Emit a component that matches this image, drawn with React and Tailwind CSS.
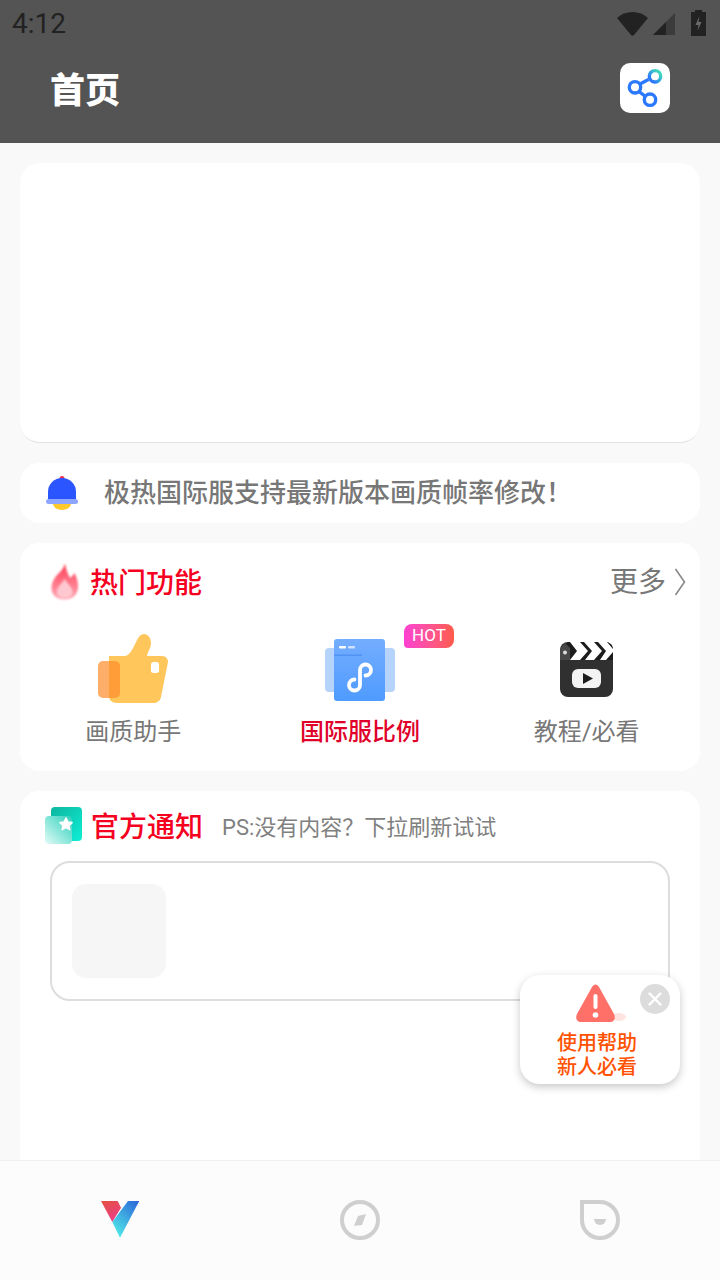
import React from "react";

const cjk = "font-['Roboto','Noto_Sans_CJK_SC',sans-serif]";

const Bell = () => (
  <svg viewBox="0 0 32 34" className="w-8 h-[34px] shrink-0">
    <path d="M13.5 3a2.5 3 0 0 1 5 0z" fill="#f0304a" />
    <path d="M2 23v-7a14 14 0 0 1 28 0v7z" fill="#2a55ff" />
    <path d="M7 28h18a9 6 0 0 1-18 0z" fill="#ffc92c" />
    <rect x="0" y="23" width="32" height="5" rx="2.5" fill="#8ea6ff" />
  </svg>
);

const Flame = () => (
  <svg viewBox="0 0 32 40" className="w-8 h-10 shrink-0">
    <defs>
      <linearGradient id="fl" x1="0" y1="0" x2="0" y2="1">
        <stop offset="0" stopColor="#ff3d55" />
        <stop offset="1" stopColor="#ffa9b6" />
      </linearGradient>
      <filter id="flb" x="-20%" y="-20%" width="140%" height="140%">
        <feGaussianBlur stdDeviation="0.9" />
      </filter>
    </defs>
    <g filter="url(#flb)">
      <path
        d="M17 1.5C18 8 20 12 22 16 24 14 25.5 13 26.5 11 29 16 30.5 21 30 26 29.5 33 24 37.5 16.5 37.5 9 37.5 3.5 33 3.5 26 3.5 20 7 15 10 12 13 9 16 6 17 1.5Z"
        fill="url(#fl)"
      />
      <path d="M16.7 16.5C18 21 24.5 25 24.5 30 24.5 33.5 21 36 16.7 36 12.5 36 9 33.5 9 30 9 24 15 22 16.7 16.5Z" fill="#ffc8d0" />
    </g>
  </svg>
);

const Thumb = () => (
  <svg viewBox="0 0 70 70" className="w-[70px] h-[70px]">
    <path
      d="M11 22H27C32 22 36 12 39 6 41 2 43 0 46 0 50 0 53 4 53 9 53 14 50 17 49 22H64C68 22 70 25 70 28L63 63C62 67 59 69 55 69H19C14 69 11 66 11 62Z"
      fill="#ffc65c"
    />
    <rect x="53" y="28" width="8" height="11" rx="2.5" fill="#fff" />
    <rect x="0" y="27" width="22" height="37" rx="5" fill="#ff8c2a" fillOpacity="0.7" />
  </svg>
);

const MiniApp = () => (
  <svg viewBox="0 0 70 62" className="w-[70px] h-[62px]">
    <defs>
      <linearGradient id="ma" x1="0" y1="0" x2="0" y2="1">
        <stop offset="0" stopColor="#74adff" />
        <stop offset="1" stopColor="#4f9bff" />
      </linearGradient>
    </defs>
    <rect x="0" y="9" width="70" height="44" rx="4" fill="#b6d3fb" />
    <rect x="9" y="0" width="51" height="62" rx="3" fill="url(#ma)" />
    <rect x="14" y="7" width="7" height="2.5" rx="1" fill="#fff" />
    <rect x="23" y="7" width="7" height="2.5" rx="1" fill="#cfe2ff" />
    <rect x="9" y="15.5" width="28" height="1.5" fill="#3f86f0" fillOpacity="0.6" />
    <path
      d="M29.5 40.5a5.5 5.5 0 1 0 5.5 5.5V31a5.5 5.5 0 1 1 5.5 5.5"
      fill="none"
      stroke="#fff"
      strokeWidth="3.8"
      strokeLinecap="round"
    />
  </svg>
);

const Clapper = () => (
  <svg viewBox="0 0 53 55" className="w-[53px] h-[55px]">
    <rect x="0" y="0" width="53" height="55" rx="8" fill="#303030" />
    <path d="M0 18V8L8 0h37c5 0 8 3 8 8v10z" fill="#1c1c1c" />
    <polygon points="10,0 20,0 28,9 20,18 10,18 17,9" fill="#fff" />
    <polygon points="24,0 34,0 42,9 34,18 25,18 32,9" fill="#fff" />
    <polygon points="38,0 47,0 53,7 53,10 46,18 40,18 46,9" fill="#fff" />
    <path d="M0 18V7L5 1l5 5 0 12z" fill="#484848" />
    <circle cx="5" cy="10.5" r="2" fill="#ddd" />
    <rect x="12" y="27" width="29" height="19" rx="6" fill="#f3f3f3" />
    <polygon points="23,31 33,36.5 23,42" fill="#1c1c1c" />
  </svg>
);

const Notice = () => (
  <svg viewBox="0 0 38 38" className="w-[38px] h-[38px] shrink-0">
    <defs>
      <linearGradient id="tb" x1="0" y1="0" x2="1" y2="1">
        <stop offset="0" stopColor="#0db5a0" />
        <stop offset="1" stopColor="#0fefd5" />
      </linearGradient>
      <linearGradient id="tf" x1="1" y1="0" x2="0" y2="1">
        <stop offset="0" stopColor="#2bd0bc" />
        <stop offset="1" stopColor="#e2fbf6" />
      </linearGradient>
    </defs>
    <rect x="6" y="0" width="31" height="34" rx="4" fill="url(#tb)" />
    <rect x="0" y="9" width="27" height="28" rx="4" fill="url(#tf)" />
    <polygon
      points="21,11 23,15 27,15.6 24,18.6 24.8,22.6 21,20.6 17.2,22.6 18,18.6 15,15.6 19,15"
      fill="#fff"
      stroke="#fff"
      strokeWidth="1.6"
      strokeLinejoin="round"
    />
  </svg>
);

const Share = () => (
  <svg viewBox="0 0 50 50" className="w-[50px] h-[50px]">
    <defs>
      <linearGradient id="sh" x1="0" y1="1" x2="1" y2="0">
        <stop offset="0.2" stopColor="#2a78fb" />
        <stop offset="0.8" stopColor="#3fd4bd" />
      </linearGradient>
    </defs>
    <path d="M20 21L28.5 16.5M19 28.5L25.5 33.5" stroke="#2a78fb" strokeWidth="3.4" />
    <circle cx="15" cy="24.3" r="5.7" fill="none" stroke="#2a78fb" strokeWidth="3.4" />
    <circle cx="30" cy="36.7" r="5.7" fill="none" stroke="#2a78fb" strokeWidth="3.4" />
    <circle cx="35" cy="13.3" r="5.7" fill="none" stroke="url(#sh)" strokeWidth="3.4" />
  </svg>
);

const Feature = ({ label, active, hot, pad, children }) => (
  <div className="flex flex-col items-center">
    <div className={`relative h-[74px] flex items-end justify-center ${pad}`}>
      {children}
      {hot && (
        <span className="absolute left-[79px] top-[-6px] w-[50px] h-6 flex items-center justify-center rounded-t-lg rounded-br-lg rounded-bl-sm bg-gradient-to-r from-[#ff3fd2] to-[#ff5a48] text-white text-[17px] font-['Roboto',sans-serif]">
          HOT
        </span>
      )}
    </div>
    <span className={`mt-[10px] text-2xl leading-9 ${active ? "font-medium text-[#e0002a]" : "text-[#777777]"}`}>
      {label}
    </span>
  </div>
);

const HelpPopup = () => (
  <div className="absolute left-[520px] top-[975px] w-40 h-[109px] rounded-[20px] bg-white shadow-[0_3px_8px_rgba(0,0,0,0.22)] flex flex-col items-center pr-[6px] pt-[9px]">
    <svg viewBox="0 0 52 40" className="w-[52px] h-10 shrink-0 ml-2">
      <ellipse cx="44" cy="33" rx="7" ry="4" fill="#ffe3e0" />
      <path
        d="M17 3c2-3.5 5-3.5 7 0l15 27c2 4 0 8-4 8H6c-4 0-6-4-4-8z"
        fill="#ff7068"
      />
      <rect x="18.5" y="10" width="4" height="15" rx="2" fill="#fff" />
      <circle cx="20.5" cy="31" r="2.8" fill="#fff" />
    </svg>
    <p className="text-xl leading-6 text-[#ff5200] text-center font-medium mt-[7px]">
      使用帮助
      <br />
      新人必看
    </p>
    <span className="absolute right-[10px] top-[9px] w-[30px] h-[30px] rounded-full bg-[#dcdcdc] flex items-center justify-center">
      <svg viewBox="0 0 14 14" className="w-[14px] h-[14px]">
        <path d="M1.5 1.5l11 11M12.5 1.5l-11 11" stroke="#fff" strokeWidth="2.4" strokeLinecap="round" />
      </svg>
    </span>
  </div>
);

const TabBar = () => (
  <div className="h-[120px] shrink-0 grid grid-cols-3 items-center justify-items-center bg-[#fcfcfc] border-t border-[#f0f0f0] pb-[1px]">
    <svg viewBox="0 0 38.5 37" className="w-[38.5px] h-[37px] mt-[-1px]">
      <defs>
        <linearGradient id="vr" x1="0" y1="0" x2="0.5" y2="1">
          <stop offset="0" stopColor="#e5503f" />
          <stop offset="1" stopColor="#ea3f85" />
        </linearGradient>
        <linearGradient id="vb" x1="1" y1="0" x2="0.3" y2="1">
          <stop offset="0" stopColor="#2b62d8" />
          <stop offset="1" stopColor="#4ee6e8" />
        </linearGradient>
      </defs>
      <polygon points="0,0 16.7,0 20,6.7 11.3,21" fill="url(#vr)" />
      <polygon points="38.3,0 27,0 11.3,21 19,36.7" fill="url(#vb)" />
    </svg>
    <svg viewBox="0 0 40 40" className="w-10 h-10">
      <circle cx="20" cy="20" r="18" fill="none" stroke="#cfcfcf" strokeWidth="4" />
      <polygon points="26,14 22,25 14,26 18,16" fill="#cfcfcf" />
    </svg>
    <svg viewBox="0 0 40 40" className="w-10 h-10">
      <path d="M2 2H20A18 18 0 1 1 2 20Z" fill="none" stroke="#cfcfcf" strokeWidth="4" />
      <path d="M14 19H26A6 6 0 0 1 14 19Z" fill="#cfcfcf" />
    </svg>
  </div>
);

export default function App() {
  return (
    <div className={`relative w-[720px] h-[1280px] overflow-hidden flex flex-col bg-[#f9f9f9] ${cjk}`}>
      {/* header */}
      <div className="h-[143px] shrink-0 bg-[#545454] flex flex-col">
        <div className="h-12 flex items-center justify-between pl-3 pr-[14px]">
          <span className="text-[28px] leading-none text-[#222222] font-['Roboto',sans-serif]">4:12</span>
          <div className="flex items-center gap-[5px]">
            <svg viewBox="0 0 31 24" className="w-[31px] h-6">
              <path d="M0 6C8-2 23-2 31 6L17 23c-1 1-2 1-3 0z" fill="#222222" />
            </svg>
            <svg viewBox="0 0 22 22" className="w-[22px] h-[22px] mr-[11px]">
              <polygon points="22,0 22,22 0,22" fill="#3b3b3b" />
              <polygon points="13,9 13,22 0,22" fill="#222222" />
            </svg>
            <svg viewBox="0 0 15 26" className="w-[15px] h-[26px] mt-[-2px]">
              <path d="M4 2V0h7v2h4v24H0V2z" fill="#222222" />
              <path d="M8.5 6L4.5 15h3l-1 6 4-9h-3z" fill="#6a6a6a" />
            </svg>
          </div>
        </div>
        <div className="flex items-center justify-between px-[50px] mt-[15px]">
          <span className="text-[35px] leading-[42px] pt-[8px] font-black text-white">首页</span>
          <div className="w-[50px] h-[50px] rounded-[10px] bg-white">
            <Share />
          </div>
        </div>
      </div>

      {/* content */}
      <div className="flex-1 min-h-0 flex flex-col gap-5 px-5 pt-5">
        <div className="h-[280px] shrink-0 rounded-[20px] bg-white border-b border-[#e4e4e4]" />

        <div className="h-[60px] shrink-0 rounded-[20px] bg-white flex items-center pl-[26px] gap-[27px]">
          <Bell />
          <span className="text-[26px] leading-none font-medium text-[#777777] ml-[-1px]">{"极热国际服支持最新版本画质帧率修改\uFF01"}</span>
        </div>

        <div className="h-[228px] shrink-0 rounded-[20px] bg-white flex flex-col">
          <div className="flex items-center justify-between pl-7 pr-[14px] pt-[19px]">
            <div className="flex items-center gap-[10px]">
              <Flame />
              <span className="text-[28px] leading-9 pt-[4px] font-medium text-[#f5001e]">热门功能</span>
            </div>
            <div className="flex items-center gap-[8px] text-[#777777]">
              <span className="text-[28px] leading-[38px] pt-[2px]">更多</span>
              <svg viewBox="0 0 12 28" className="w-3 h-7">
                <path d="M1.5 1L10.5 14 1.5 27" fill="none" stroke="#888888" strokeWidth="1.6" />
              </svg>
            </div>
          </div>
          <div className="grid grid-cols-3 mt-[28px]">
            <Feature label="画质助手">
              <Thumb />
            </Feature>
            <Feature label="国际服比例" active hot pad="pb-[3px]">
              <MiniApp />
            </Feature>
            <Feature label="教程/必看" pad="pb-[7px]">
              <Clapper />
            </Feature>
          </div>
        </div>

        <div className="flex-1 min-h-0 rounded-t-[20px] bg-white px-[30px] pt-[15px]">
          <div className="flex items-center ml-[-5px]">
            <Notice />
            <span className="ml-2 text-[28px] leading-9 pt-[4px] font-medium text-[#f5001e]">官方通知</span>
            <span className="text-[22px] leading-9 pt-[4px] text-[#808080] ml-[19px]">{"PS:没有内容\uFF1F下拉刷新试试"}</span>
          </div>
          <div className="mt-[15px] h-[140px] rounded-[20px] border-2 border-[#dddddd] pl-5 pt-[21px]">
            <div className="w-[94px] h-[94px] rounded-[14px] bg-[#f6f6f6]" />
          </div>
        </div>
      </div>

      <TabBar />
      <HelpPopup />
    </div>
  );
}
